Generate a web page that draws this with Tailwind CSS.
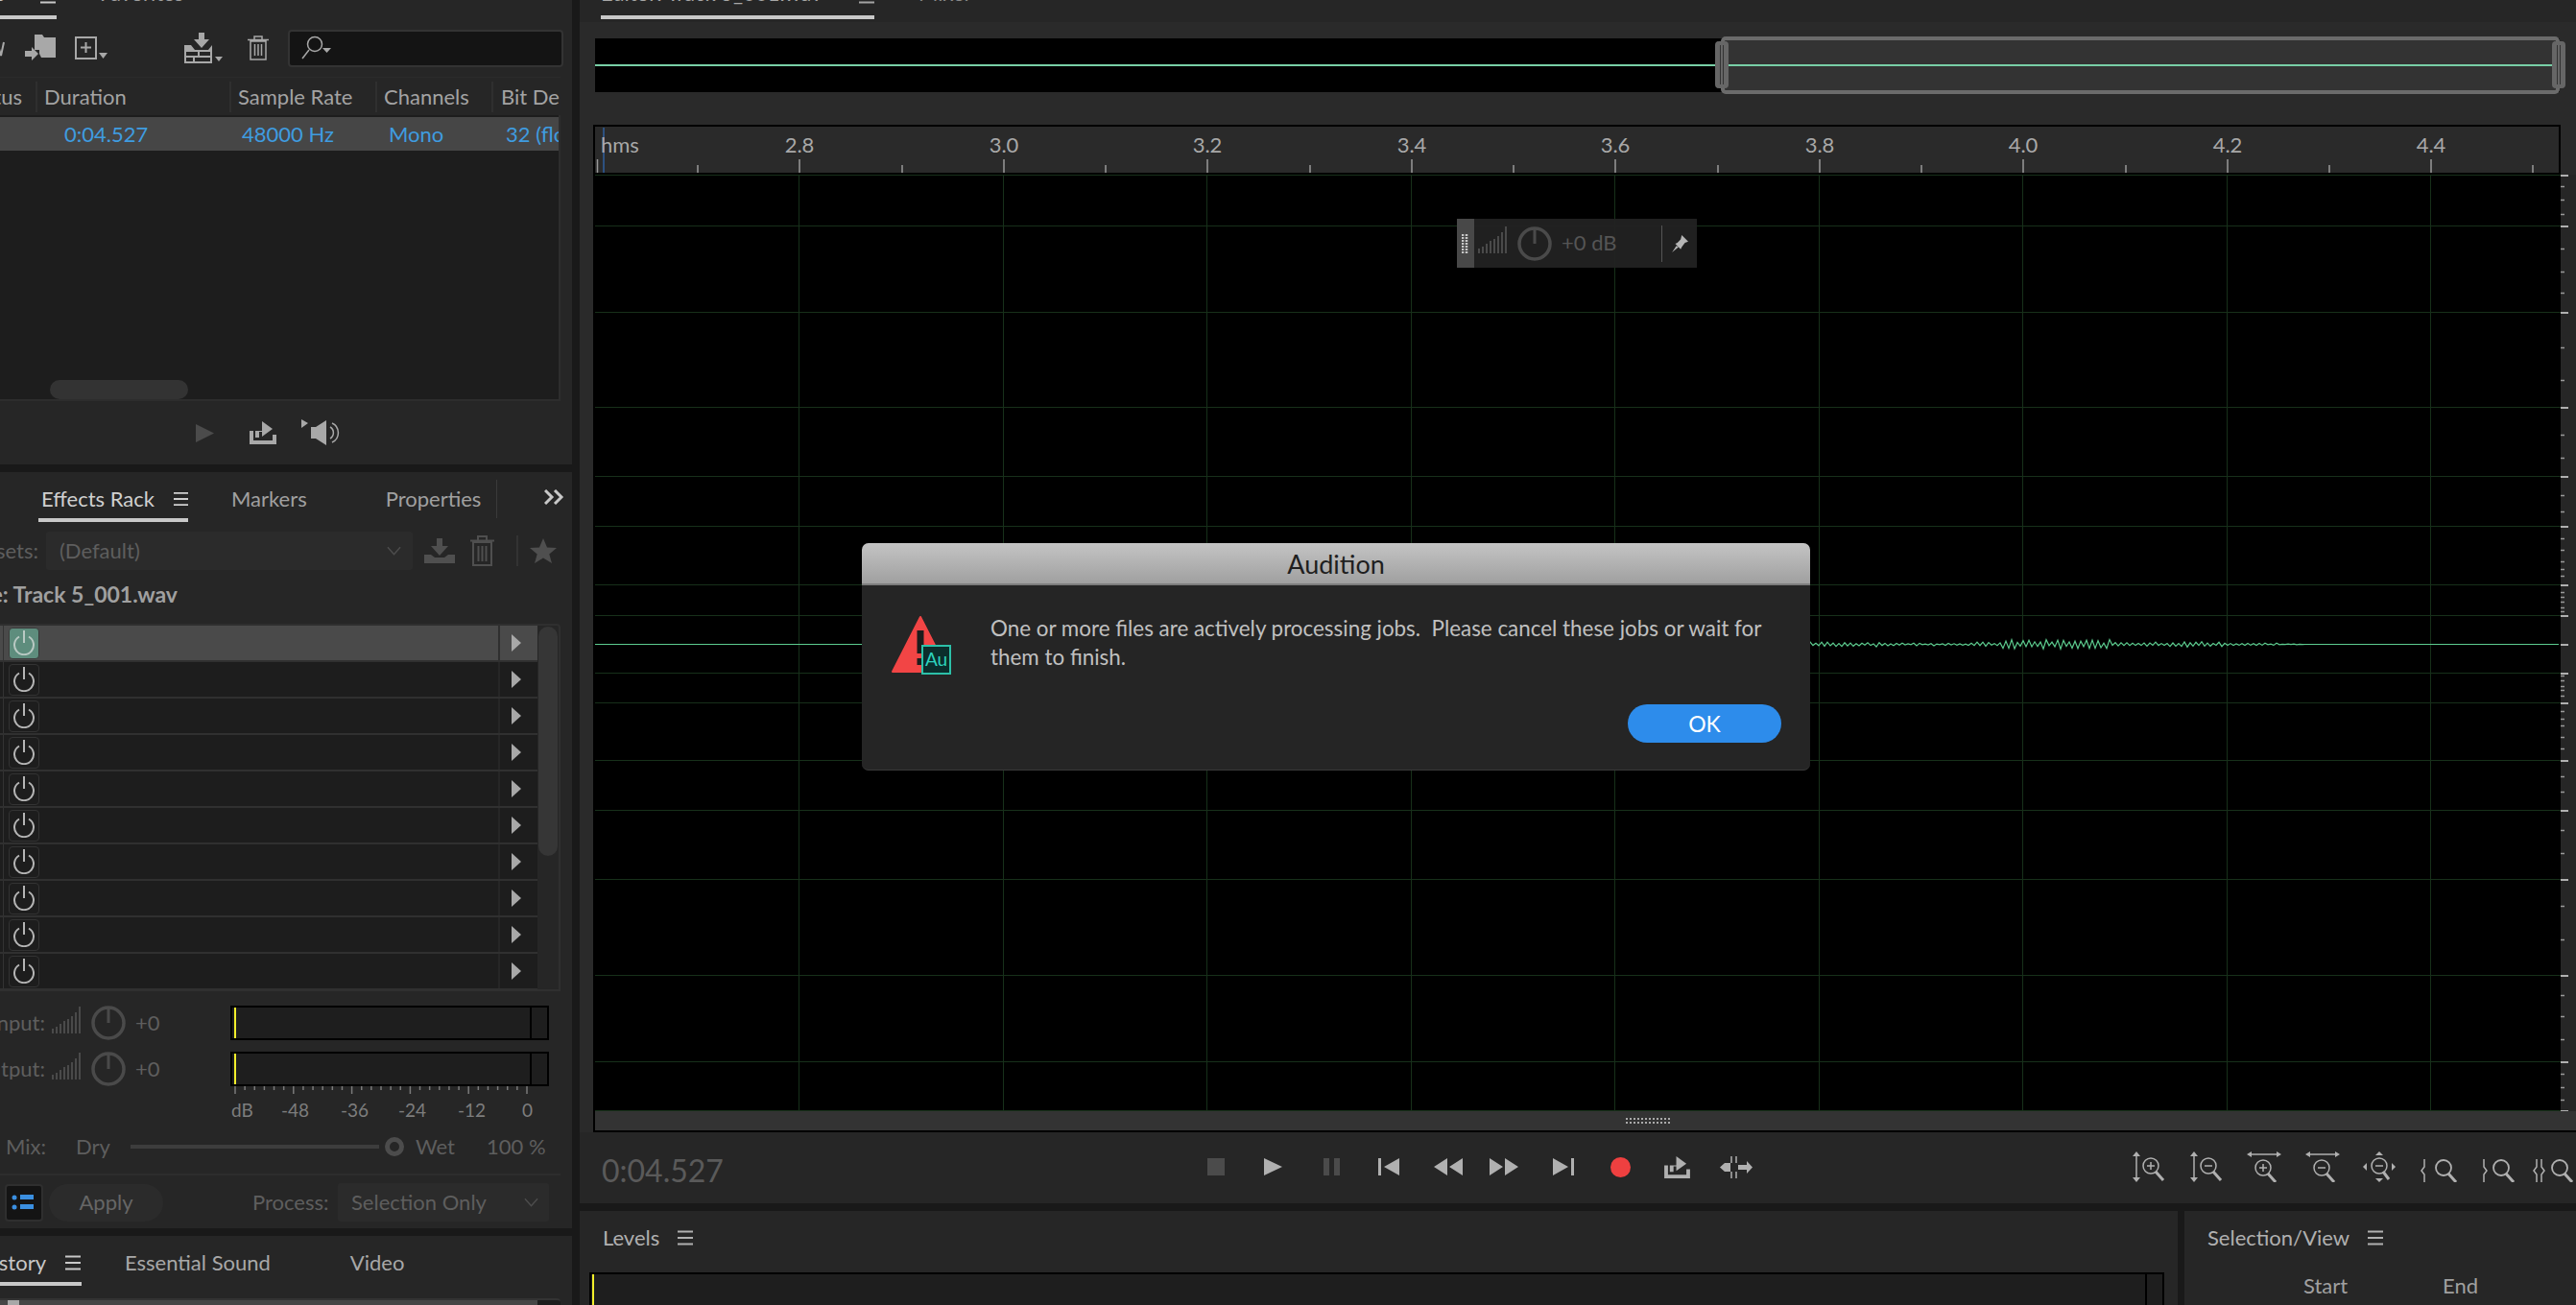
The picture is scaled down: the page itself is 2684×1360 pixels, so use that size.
<!DOCTYPE html>
<html lang="en">
<head>
<meta charset="UTF-8">
<title>Audition</title>
<script src="https://cdn.jsdelivr.net/npm/@tailwindcss/browser@4"></script>
</head>
<body class="bg-[#191919] w-[2684px] h-[1360px] overflow-hidden relative font-['Lato',sans-serif] text-[22px] leading-none text-[#a3a3a3]">

<svg class="hidden">
  <symbol id="menu" viewBox="0 0 16 16"><path d="M0 1.500h16M0 8h16M0 14.500h16" stroke="currentColor" stroke-width="2" fill="none"/></symbol>
  <symbol id="power" viewBox="0 0 24 26"><path d="M7 6.500a10 10 0 1 0 10 0" fill="none" stroke="currentColor" stroke-width="2"/><path d="M12 0v13" stroke="currentColor" stroke-width="2"/></symbol>
  <symbol id="bars" viewBox="0 0 30 28"><path d="M1 28v-5M5 28v-7M9 28v-10M13 28v-13M17 28v-15M21 28v-18M25 28v-22M29 28V0" stroke="currentColor" stroke-width="2" fill="none"/></symbol>
  <symbol id="knob" viewBox="0 0 36 36"><circle cx="18" cy="18" r="16" fill="none" stroke="currentColor" stroke-width="3.500"/><path d="M18 2v16" stroke="currentColor" stroke-width="3"/></symbol>
  <symbol id="chev" viewBox="0 0 16 10"><path d="M1 1l7 8 7-8" fill="none" stroke="currentColor" stroke-width="1.500"/></symbol>
</svg>

<div class="flex h-full">
  <!-- left column -->
  <div class="w-[596px] flex flex-col gap-[8px] shrink-0">

    <!-- files panel -->
    <section class="h-[484px] bg-[#262626] flex flex-col shrink-0">
      <div class="h-[20px] relative overflow-hidden shrink-0">
        <div class="w-[59px] h-[20px] border-b-4 border-[#c8c8c8] flex justify-end overflow-hidden">
          <span class="-mt-[18px] mr-[37px] whitespace-nowrap text-[#c8c8c8]">Files</span>
          <svg class="w-[16px] h-[16px] text-[#c8c8c8] shrink-0 -mt-[12px] mr-[1px]"><use href="#menu"/></svg>
        </div>
        <span class="absolute left-[104px] -top-[18px] text-[#a0a0a0]">Favorites</span>
      </div>
      <div class="h-[60px] flex items-center text-[#a8a8a8] shrink-0">
        <svg class="w-[5px] h-[24px] ml-0" viewBox="0 0 5 24"><path d="M-3 6l4 14 3-14" fill="none" stroke="currentColor" stroke-width="2"/></svg>
        <svg class="w-[33px] h-[28px] ml-[21px]" viewBox="0 0 33 28"><path d="M10 0h8l2 3h12v21H17l-2-4v-4H10z" fill="currentColor"/><path d="M0 17h7v-4l7 7-7 7v-4H0z" fill="currentColor"/></svg>
        <svg class="w-[34px] h-[24px] ml-[19px]" viewBox="0 0 34 24"><path d="M1 1h21v22H1z" fill="none" stroke="currentColor" stroke-width="2"/><path d="M11.500 6v11M6 11.500h11" stroke="currentColor" stroke-width="2"/><path d="M25 17h9l-4.500 6z" fill="currentColor"/></svg>
        <svg class="w-[40px] h-[32px] ml-[80px]" viewBox="0 0 40 32"><path d="M15 0h6v7h5l-8 9-8-9h5z" fill="currentColor"/><path d="M0 13h7l4 5h14l4-5v19H0zM2 20v4h12v-4zM16 20v4h11v-4zM2 26v4h7v-4zM11 26v4h16v-4z" fill="currentColor" fill-rule="evenodd"/><path d="M32 25h8l-4 5z" fill="currentColor"/></svg>
        <svg class="w-[22px] h-[26px] ml-[26px]" viewBox="0 0 22 26"><path d="M3 6h16v19H3zM0 4.500h22M7 4V1h8v3M7.500 9v12M11 9v12M14.500 9v12" fill="none" stroke="currentColor" stroke-width="1.500"/></svg>
        <div class="w-[287px] h-[39px] ml-[20px] bg-[#141414] border-2 border-[#333] rounded-[4px] flex items-center pl-[12px]">
          <svg class="w-[34px] h-[26px]" viewBox="0 0 34 26"><circle cx="14" cy="9" r="7.500" fill="none" stroke="currentColor" stroke-width="1.500"/><path d="M8 15L1 24" stroke="currentColor" stroke-width="1.500"/><path d="M22 13h9l-4.500 5z" fill="currentColor"/></svg>
        </div>
      </div>
      <div class="w-[584px] h-[40px] grid grid-cols-[37px_202px_152px_121px_72px] items-center overflow-hidden border-t border-[#2b2b2b] shrink-0 whitespace-nowrap">
        <div class="flex justify-end pr-[14px] overflow-hidden"><span>Status</span></div>
        <div class="border-l-2 border-[#2f2f2f] pl-[7px] h-[32px] flex items-center">Duration</div>
        <div class="border-l-2 border-[#2f2f2f] pl-[7px] h-[32px] flex items-center">Sample Rate</div>
        <div class="border-l-2 border-[#2f2f2f] pl-[7px] h-[32px] flex items-center">Channels</div>
        <div class="border-l-2 border-[#2f2f2f] pl-[8px] h-[32px] flex items-center overflow-hidden">Bit Depth</div>
      </div>
      <div class="w-[584px] h-[298px] bg-[#1d1d1d] border-r-2 border-b-2 border-[#2d2d2d] flex flex-col shrink-0">
        <div class="h-[35px] mt-[2px] bg-[#464646] grid grid-cols-[37px_202px_152px_121px_70px] items-center overflow-hidden text-[#3f9ce0] whitespace-nowrap shrink-0">
          <div></div><div class="pl-[30px]">0:04.527</div><div class="pl-[13px]">48000 Hz</div><div class="pl-[14px]">Mono</div><div class="pl-[15px] overflow-hidden">32 (float)</div>
        </div>
        <div class="mt-auto ml-[52px] w-[144px] h-[20px] rounded-full bg-[#333]"></div>
      </div>
      <div class="flex-1 flex items-center text-[#a8a8a8]">
        <svg class="w-[19px] h-[19px] ml-[204px]" viewBox="0 0 19 19"><path d="M0 0l19 9.500L0 19z" fill="#4b4b4b"/></svg>
        <svg class="w-[28px] h-[24px] ml-[37px]" viewBox="0 0 28 24"><path d="M2 10v12h24v-8" fill="none" stroke="currentColor" stroke-width="4"/><path d="M6 17v-7h7V0l11 8-11 8v-5h-3v6z" fill="currentColor"/></svg>
        <svg class="w-[40px] h-[28px] ml-[26px]" viewBox="0 0 40 28"><path d="M0 0l7 4-7 5z" fill="currentColor"/><path d="M10 8h5l11-7v26L15 20h-5z" fill="currentColor"/><path d="M30 8a7 7 0 0 1 0 12M32 4a11 11 0 0 1 0 20" fill="none" stroke="currentColor" stroke-width="1.500"/></svg>
      </div>
    </section>

    <!-- effects rack panel -->
    <section class="h-[788px] bg-[#262626] flex flex-col shrink-0">
      <div class="h-[52px] flex items-center shrink-0">
        <div class="ml-[40px] w-[156px] h-[52px] border-b-4 border-[#c8c8c8] flex items-center pl-[3px] pt-[8px] text-[#d0d0d0]">
          <span class="whitespace-nowrap">Effects Rack</span>
          <svg class="w-[16px] h-[16px] ml-[20px]"><use href="#menu"/></svg>
        </div>
        <span class="ml-[45px] text-[#a0a0a0] mt-[4px]">Markers</span>
        <span class="ml-[82px] text-[#a0a0a0] mt-[4px]">Properties</span>
        <div class="ml-[16px] w-px h-[40px] bg-[#3a3a3a] mt-[4px]"></div>
        <svg class="w-[21px] h-[16px] ml-[49px]" viewBox="0 0 21 16"><path d="M1 1l7 7-7 7M11 1l7 7-7 7" fill="none" stroke="#c8c8c8" stroke-width="3"/></svg>
      </div>
      <div class="h-[40px] mt-[10px] flex items-center text-[#5e5e5e] shrink-0">
        <div class="w-[40px] flex justify-end overflow-hidden"><span>Presets:</span></div>
        <div class="w-[382px] h-[40px] ml-[8px] bg-[#2b2b2b] rounded-[3px] flex items-center justify-between pl-[14px] pr-[12px]">
          <span>(Default)</span>
          <svg class="w-[15px] h-[10px] text-[#4d4d4d]"><use href="#chev"/></svg>
        </div>
        <svg class="w-[32px] h-[26px] ml-[12px]" viewBox="0 0 32 26"><path d="M13 0h6v8h6l-9 10-9-10h6z" fill="#4f4f4f"/><path d="M0 17h7l4 3h10l4-3h7v9H0z" fill="#4f4f4f"/></svg>
        <svg class="w-[25px] h-[32px] ml-[16px]" viewBox="0 0 25 32"><path d="M3 7h19v24H3zM0 5.500h25M8 5V1h9v4M8.500 11v16M12.500 11v16M16.500 11v16" fill="none" stroke="#4f4f4f" stroke-width="2"/></svg>
        <div class="w-[2px] h-[32px] bg-[#333] ml-[23px]"></div>
        <svg class="w-[28px] h-[26px] ml-[12px]" viewBox="0 0 28 26"><path d="M14 0l4 9.500 10 .5-7.700 6.500L23 26l-9-5.500L5 26l2.700-9.500L0 10l10-.5z" fill="#4f4f4f"/></svg>
      </div>
      <div class="h-[58px] w-[185px] flex items-center justify-end overflow-hidden font-bold text-[23px] text-[#a0a0a0] whitespace-nowrap shrink-0 -mt-[2px] pb-[3px]"><span>File: Track 5_001.wav</span></div>
      <div class="w-[584px] h-[383px] flex border-r-2 border-b-2 border-t-2 border-[#2f2f2f] rounded-tr-[4px] shrink-0">
        <div id="rows" class="w-[560px] shrink-0"></div>
        <div class="flex-1 pt-[1px] pl-[1px]"><div class="w-[20px] h-[239px] rounded-full bg-[#363636]"></div></div>
      </div>
      <div class="h-[36px] mt-[15px] flex items-center text-[#5e5e5e] shrink-0">
        <div class="w-[47px] flex justify-end overflow-hidden"><span>Input:</span></div>
        <svg class="w-[30px] h-[28px] ml-[7px] text-[#4a4a4a] -mt-[6px]"><use href="#bars"/></svg>
        <svg class="w-[36px] h-[36px] ml-[11px] text-[#4a4a4a]"><use href="#knob"/></svg>
        <span class="ml-[10px] w-[24px]">+0</span>
        <div class="w-[332px] h-[36px] ml-[75px] border-2 border-black bg-[#1e1e1e] flex">
          <div class="w-[2px] ml-[2px] bg-[#f2ee2a]"></div>
          <div class="ml-auto mr-[16px] w-[2px] bg-black"></div>
        </div>
      </div>
      <div class="h-[36px] mt-[12px] flex items-center text-[#5e5e5e] shrink-0">
        <div class="w-[47px] flex justify-end overflow-hidden"><span>Output:</span></div>
        <svg class="w-[30px] h-[28px] ml-[7px] text-[#4a4a4a] -mt-[6px]"><use href="#bars"/></svg>
        <svg class="w-[36px] h-[36px] ml-[11px] text-[#4a4a4a]"><use href="#knob"/></svg>
        <span class="ml-[10px] w-[24px]">+0</span>
        <div class="w-[332px] h-[36px] ml-[75px] border-2 border-black bg-[#1e1e1e] flex">
          <div class="w-[2px] ml-[2px] bg-[#f2ee2a]"></div>
          <div class="ml-auto mr-[16px] w-[2px] bg-black"></div>
        </div>
      </div>
      <svg id="dbTicks" class="w-[332px] h-[8px] ml-[240px] shrink-0" viewBox="240 0 332 8"></svg>
      <div class="h-[32px] ml-[240px] w-[332px] relative text-[#7d7d7d] text-[19px] shrink-0">
        <span class="absolute left-[1px] top-[7px]">dB</span>
        <span class="absolute left-[53px] top-[7px]">-48</span>
        <span class="absolute left-[115px] top-[7px]">-36</span>
        <span class="absolute left-[175px] top-[7px]">-24</span>
        <span class="absolute left-[237px] top-[7px]">-12</span>
        <span class="absolute left-[304px] top-[7px]">0</span>
      </div>
      <div class="h-[30px] mt-[8px] flex items-center text-[#5e5e5e] shrink-0">
        <span class="ml-[6px] w-[73px]">Mix:</span>
        <span class="w-[57px]">Dry</span>
        <div class="w-[259px] h-[4px] bg-[#3d3d3d]"></div>
        <div class="w-[20px] h-[20px] ml-[6px] rounded-full border-[5px] border-[#4c4c4c]"></div>
        <span class="ml-[12px] w-[74px]">Wet</span>
        <span>100 %</span>
      </div>
      <div class="w-[584px] h-[2px] bg-[#2d2d2d] mt-[13px] shrink-0"></div>
      <div class="h-[40px] mt-[8px] flex items-center text-[#5e5e5e] shrink-0">
        <div class="w-[40px] h-[39px] ml-[5px] bg-[#141414] border-2 border-[#2f2f2f] rounded-[4px] flex items-center justify-center">
          <svg class="w-[26px] h-[18px]" viewBox="0 0 26 18"><circle cx="3" cy="4" r="2.500" fill="#3b8fe0"/><circle cx="3" cy="14" r="2.500" fill="#3b8fe0"/><path d="M9 1h14v5H9zM9 11h14v5H9z" fill="#3b8fe0"/></svg>
        </div>
        <div class="w-[119px] h-[39px] ml-[6px] rounded-full bg-[#2b2b2b] flex items-center justify-center text-[#666]">Apply</div>
        <span class="ml-[93px] w-[89px]">Process:</span>
        <div class="w-[220px] h-[40px] bg-[#2b2b2b] rounded-[3px] flex items-center justify-between pl-[14px] pr-[11px]">
          <span class="whitespace-nowrap">Selection Only</span>
          <svg class="w-[15px] h-[10px] text-[#4d4d4d]"><use href="#chev"/></svg>
        </div>
      </div>
    </section>

    <!-- history panel -->
    <section class="flex-1 bg-[#262626] flex flex-col min-h-0 overflow-hidden">
      <div class="h-[52px] flex items-center shrink-0 text-[#a8a8a8]">
        <div class="w-[85px] h-[52px] border-b-4 border-[#c8c8c8] flex items-center justify-end pr-[1px] pt-[8px] overflow-hidden text-[#c8c8c8]">
          <span class="whitespace-nowrap">History</span>
          <svg class="w-[16px] h-[16px] ml-[20px] shrink-0"><use href="#menu"/></svg>
        </div>
        <span class="ml-[45px] mt-[4px]">Essential Sound</span>
        <span class="ml-[83px] mt-[4px]">Video</span>
      </div>
      <div class="mt-[13px] w-[584px] flex-1 border-t-2 border-[#333] bg-[#1d1d1d] rounded-tr-[4px]">
        <div class="w-[560px] h-[5px] bg-[#464646]"><div class="w-[12px] h-[5px] ml-[8px] bg-[#a8a8a8]"></div></div>
      </div>
    </section>
  </div>

  <!-- main column -->
  <div class="ml-[8px] flex-1 flex flex-col gap-[8px] min-w-0">
    <section class="h-[1254px] bg-[#2a2a2a] flex flex-col shrink-0 relative">
      <div class="h-[23px] bg-[#262626] relative overflow-hidden shrink-0">
        <div class="ml-[22px] w-[285px] h-[20px] border-b-4 border-[#c8c8c8] flex justify-between">
          <span class="-mt-[18px] whitespace-nowrap text-[#a8a8a8]">Editor: Track 5_001.wav</span>
          <svg class="w-[16px] h-[16px] -mt-[12px]"><use href="#menu"/></svg>
        </div>
        <span class="absolute left-[353px] -top-[18px] text-[#8a8a8a]">Mixer</span>
      </div>
      <!-- overview -->
      <div class="ml-[16px] mt-[17px] w-[2047px] h-[56px] bg-black relative shrink-0">
        <div class="absolute left-0 right-0 top-[27px] h-[2px] bg-[#78cfa6]"></div>
        <div class="absolute left-[1173px] -top-[2px] w-[874px] h-[60px] border-4 border-[#6b6b6b] rounded-[5px] bg-[#333] flex items-center">
          <div class="w-full h-[2px] bg-[#78cfa6]"></div>
        </div>
        <div class="absolute left-[1167px] top-[3px] w-[14px] h-[49px] rounded-[4px] bg-[#666] border-x-2 border-[#666] flex justify-center gap-[2px] py-[4px]"><div class="w-px bg-[#333]"></div><div class="w-px bg-[#333]"></div></div>
        <div class="absolute left-[2039px] top-[3px] w-[14px] h-[49px] rounded-[4px] bg-[#666] border-x-2 border-[#666] flex justify-center gap-[2px] py-[4px]"><div class="w-px bg-[#333]"></div><div class="w-px bg-[#333]"></div></div>
      </div>
      <!-- ruler -->
      <div id="ruler" class="ml-[14px] mt-[34px] w-[2050px] h-[52px] bg-[#2a2a2a] border-2 border-black relative shrink-0 text-[#a8a8a8]">
        <svg id="rulerTicks" class="absolute left-0 top-0 w-[2046px] h-[48px]" viewBox="620 132 2046 48"></svg>
        <span class="absolute left-[6px] top-[8px]">hms</span>
      </div>
      <!-- wave -->
      <div class="ml-[14px] h-[976px] flex shrink-0">
        <div class="w-[2050px] bg-black border-l-2 border-black relative shrink-0">
          <svg id="wave" class="absolute left-0 top-0 w-[2048px] h-[976px]" viewBox="620 182 2048 976"></svg>
          <!-- clip gain hud -->
          <div class="absolute left-[898px] top-[46px] w-[250px] h-[51px] bg-[#222]/95 flex items-center text-[#555]">
            <div class="w-[18px] h-full bg-[#484848] flex items-center justify-center">
              <svg class="w-[8px] h-[20px]" viewBox="0 0 8 20"><path d="M1 0v20M5 0v20" stroke="#c8c8c8" stroke-width="2.500" stroke-dasharray="2 1" fill="none"/></svg>
            </div>
            <svg class="w-[30px] h-[28px] ml-[4px] -mt-[8px] text-[#4a4a4a]"><use href="#bars"/></svg>
            <svg class="w-[36px] h-[36px] ml-[11px] text-[#4a4a4a]"><use href="#knob"/></svg>
            <span class="ml-[10px] w-[104px] whitespace-nowrap -mt-[2px]">+0 dB</span>
            <div class="w-[1px] h-[38px] bg-[#555]"></div>
            <svg class="w-[18px] h-[18px] ml-[9px]" viewBox="0 0 16 16"><path d="M10 0l6 6-3 1-3 4-1 2-5-5 2-1 3-3zM5 10l2 1-6 5z" fill="#b5b5b5"/></svg>
          </div>
        </div>
        <svg id="dbRuler" class="w-[16px] h-[976px] shrink-0 bg-[#262626]" viewBox="2668 182 16 976"></svg>
      </div>
      <!-- horizontal scroll -->
      <div class="ml-[14px] h-[22px] bg-[#333] border-b-2 border-l-2 border-black flex items-center shrink-0">
        <svg class="w-[47px] h-[6px] ml-[1074px]" viewBox="0 0 47 6"><path d="M0 1h47M0 5h47" stroke="#aaa" stroke-width="2" stroke-dasharray="2 2" fill="none"/></svg>
      </div>
      <!-- transport -->
      <div class="flex-1 bg-[#262626] flex items-center text-[#b0b0b0]">
        <span class="ml-[23px] w-[631px] text-[32px] text-[#5a5a5a] mt-[6px]">0:04.527</span>
        <div class="flex items-center -mt-[2px]">
          <svg class="w-[18px] h-[18px]" viewBox="0 0 18 18"><path d="M0 0h18v18H0z" fill="#4b4b4b"/></svg>
          <svg class="w-[19px] h-[18px] ml-[41px]" viewBox="0 0 19 18"><path d="M0 0l19 9-19 9z" fill="currentColor"/></svg>
          <svg class="w-[17px] h-[18px] ml-[43px]" viewBox="0 0 17 18"><path d="M0 0h6v18H0zM11 0h6v18h-6z" fill="#4b4b4b"/></svg>
          <svg class="w-[22px] h-[18px] ml-[40px]" viewBox="0 0 22 18"><path d="M0 0h3v18H0zM22 0v18L6 9z" fill="currentColor"/></svg>
          <svg class="w-[30px] h-[18px] ml-[36px]" viewBox="0 0 30 18"><path d="M14 0v18L0 9zM30 0v18L16 9z" fill="currentColor"/></svg>
          <svg class="w-[30px] h-[18px] ml-[28px]" viewBox="0 0 30 18"><path d="M0 0v18l14-9zM16 0v18l14-9z" fill="currentColor"/></svg>
          <svg class="w-[22px] h-[18px] ml-[36px]" viewBox="0 0 22 18"><path d="M0 0v18l16-9zM19 0h3v18h-3z" fill="currentColor"/></svg>
          <div class="w-[21px] h-[21px] ml-[38px] rounded-full bg-[#ef4040]"></div>
          <svg class="w-[29px] h-[23px] ml-[34px]" viewBox="0 0 28 24"><path d="M2 10v12h24v-8" fill="none" stroke="currentColor" stroke-width="4"/><path d="M6 17v-7h7V0l11 8-11 8v-5h-3v6z" fill="currentColor"/></svg>
          <svg class="w-[34px] h-[23px] ml-[30px]" viewBox="0 0 34 23"><path d="M12 0v7M12 16v7M17 0v7M17 16v7" stroke="currentColor" stroke-width="1.500"/><path d="M0 11.500L5 7h6v9H5zM34 11.500L28 5v4h-9v5h9v4z" fill="currentColor"/></svg>
        </div>
        <!-- zoom buttons -->
        <div class="flex items-end ml-[396px] h-[32px] text-[#b0b0b0] -mt-[2px]">
          <svg class="w-[34px] h-[32px]" viewBox="0 0 34 32"><path d="M4 3v26" stroke="currentColor" stroke-width="1.500"/><path d="M4 0l4 5H0zM4 32l4-5H0z" fill="currentColor"/><circle cx="19" cy="15" r="8" fill="none" stroke="currentColor" stroke-width="1.500"/><path d="M15 15h8M19 11v8" stroke="currentColor" stroke-width="1.500"/><path d="M24 21l8 9" stroke="currentColor" stroke-width="3"/></svg>
          <svg class="w-[34px] h-[32px] ml-[26px]" viewBox="0 0 34 32"><path d="M4 3v26" stroke="currentColor" stroke-width="1.500"/><path d="M4 0l4 5H0zM4 32l4-5H0z" fill="currentColor"/><circle cx="19" cy="15" r="8" fill="none" stroke="currentColor" stroke-width="1.500"/><path d="M15 15h8" stroke="currentColor" stroke-width="1.500"/><path d="M24 21l8 9" stroke="currentColor" stroke-width="3"/></svg>
          <svg class="w-[36px] h-[32px] ml-[25px]" viewBox="0 0 36 32"><path d="M3 3h30" stroke="currentColor" stroke-width="1.500"/><path d="M0 3l5-3v6zM36 3l-5-3v6z" fill="currentColor"/><circle cx="17" cy="17" r="8" fill="none" stroke="currentColor" stroke-width="1.500"/><path d="M13 17h8M17 13v8" stroke="currentColor" stroke-width="1.500"/><path d="M22 23l8 9" stroke="currentColor" stroke-width="3"/></svg>
          <svg class="w-[36px] h-[32px] ml-[25px]" viewBox="0 0 36 32"><path d="M3 3h30" stroke="currentColor" stroke-width="1.500"/><path d="M0 3l5-3v6zM36 3l-5-3v6z" fill="currentColor"/><circle cx="17" cy="17" r="8" fill="none" stroke="currentColor" stroke-width="1.500"/><path d="M13 17h8" stroke="currentColor" stroke-width="1.500"/><path d="M22 23l8 9" stroke="currentColor" stroke-width="3"/></svg>
          <svg class="w-[34px] h-[32px] ml-[24px]" viewBox="0 0 34 32"><path d="M17 0l4 4h-8zM17 32l4-4h-8zM0 16l4-4v8zM34 16l-4-4v8z" fill="currentColor"/><circle cx="17" cy="15" r="8" fill="none" stroke="currentColor" stroke-width="1.500"/><path d="M13 15h8" stroke="currentColor" stroke-width="1.500"/><path d="M21 21l6 8" stroke="currentColor" stroke-width="3"/></svg>
          <svg class="w-[40px] h-[24px] ml-[26px]" viewBox="0 0 40 24"><path d="M4 0v8l-3 4 3 4v8" fill="none" stroke="currentColor" stroke-width="1.500"/><circle cx="24" cy="9" r="8" fill="none" stroke="currentColor" stroke-width="1.800"/><path d="M29 15l8 9" stroke="currentColor" stroke-width="3"/></svg>
          <svg class="w-[35px] h-[24px] ml-[25px]" viewBox="0 0 35 24"><path d="M1 0v8l3 4-3 4v8" fill="none" stroke="currentColor" stroke-width="1.500"/><circle cx="19" cy="9" r="8" fill="none" stroke="currentColor" stroke-width="1.800"/><path d="M24 15l8 9" stroke="currentColor" stroke-width="3"/></svg>
          <svg class="w-[42px] h-[24px] ml-[17px]" viewBox="0 0 42 24"><path d="M4 0v8l-3 4 3 4v8M9 0v8l3 4-3 4v8" fill="none" stroke="currentColor" stroke-width="1.500"/><circle cx="28" cy="9" r="8" fill="none" stroke="currentColor" stroke-width="1.800"/><path d="M33 15l8 9" stroke="currentColor" stroke-width="3"/></svg>
        </div>
      </div>
    </section>

    <!-- bottom panels -->
    <div class="flex-1 flex gap-[7px] min-h-0 overflow-hidden">
      <section class="w-[1665px] bg-[#262626] shrink-0 flex flex-col overflow-hidden">
        <div class="h-[64px] flex items-center pl-[24px] pb-[8px] text-[#b0b0b0] shrink-0">
          <span>Levels</span>
          <svg class="w-[16px] h-[16px] ml-[19px]"><use href="#menu"/></svg>
        </div>
        <div class="ml-[10px] w-[1641px] flex-1 border-2 border-b-0 border-black bg-[#1e1e1e] flex">
          <div class="w-[2px] ml-[1px] bg-[#f2ee2a]"></div>
          <div class="ml-auto mr-[16px] w-[2px] bg-black"></div>
        </div>
      </section>
      <section class="flex-1 bg-[#262626] flex flex-col">
        <div class="h-[56px] flex items-center pl-[24px] text-[#b0b0b0] shrink-0">
          <span>Selection/View</span>
          <svg class="w-[16px] h-[16px] ml-[19px]"><use href="#menu"/></svg>
        </div>
        <div class="flex pl-[124px] text-[#a0a0a0] mt-[11px]">
          <span class="w-[145px]">Start</span><span>End</span>
        </div>
      </section>
    </div>
  </div>
</div>

<!-- modal dialog -->
<div class="absolute left-[898px] top-[566px] w-[988px] h-[237px] bg-[#252525] rounded-[7px] overflow-hidden border-b border-[#3a3a3a]">
  <div class="h-[44px] bg-linear-to-b from-[#c4c4c4] to-[#a0a0a0] border-b-2 border-[#7d7d7d] flex items-center justify-center text-[#1f1f1f] text-[27px]">Audition</div>
  <div class="flex pt-[31px]">
    <svg class="w-[62px] h-[62px] ml-[31px] shrink-0" viewBox="0 0 62 62">
      <path d="M30 2 L59 59 H1 Z" fill="#f24545" stroke="#f24545" stroke-width="2" stroke-linejoin="round"/>
      <path d="M26.500 16h7v24h-7zM26.500 45h7v7h-7z" fill="#1c1c1c"/>
      <rect x="32" y="32" width="29" height="29" fill="#0b2e2c" stroke="#2cc0a8" stroke-width="2"/>
      <text x="46.500" y="53" text-anchor="middle" fill="#2dd4bf" font-size="19" font-family="Lato, sans-serif">Au</text>
    </svg>
    <p class="ml-[41px] w-[830px] text-[#c0c0c0] text-[22.4px] leading-[30px] whitespace-pre-wrap -mt-[1px]">One or more files are actively processing jobs.  Please cancel these jobs or wait for them to finish.</p>
  </div>
  <div class="flex justify-end pr-[30px] pt-[31px]">
    <div class="w-[160px] h-[40px] rounded-full bg-[#2d8ceb] text-white flex items-center justify-center text-[23px]">OK</div>
  </div>
</div>

<script>
  // rack rows
  var rows = '';
  for (var i = 0; i < 10; i++) {
    var on = i === 0;
    rows += '<div class="h-[38px] flex items-center border-b-2 border-[#303030] ' + (on ? 'bg-[#4a4a4a]' : 'bg-[#1d1d1d]') + '">' +
      '<div class="w-[1px] h-full ml-[3px] bg-[#333]"></div>' +
      '<div class="w-[32px] h-[33px] ml-[5px] rounded-[4px] border flex items-center justify-center ' + (on ? 'bg-[#5e8d7d] border-[#3a3a3a] text-[#b9c9c3]' : 'border-[#333] text-[#b5b5b5]') + '">' +
      '<svg class="w-[24px] h-[26px]"><use href="#power"/></svg></div>' +
      '<div class="w-[2px] h-full ml-[478px] ' + (on ? 'bg-[#2f2f2f]' : 'bg-[#262626]') + '"></div>' +
      '<svg class="w-[10px] h-[18px] ml-[12px]" viewBox="0 0 10 18"><path d="M0 0l10 9-10 9z" fill="#a8a8a8"/></svg></div>';
  }
  document.getElementById('rows').innerHTML = rows;

  // db ticks below the meters
  var t = '';
  for (var k = 0; k <= 30; k++) {
    var x = 245 + k * 304 / 30;
    t += '<path d="M' + x + ' 0V' + (k % 6 === 0 ? 8 : 4) + '" stroke="#7a7a7a" stroke-width="1.500"/>';
  }
  document.getElementById('dbTicks').innerHTML = t;

  // time ruler
  var labels = ['2.8','3.0','3.2','3.4','3.6','3.8','4.0','4.2','4.4'];
  var ruler = document.getElementById('ruler');
  var rt = '<path d="M622.500 166V180" stroke="#9a9a9a" stroke-width="1.500"/><path d="M629 133V180" stroke="#2f5f9f" stroke-width="1.500"/>';
  var grid = '';
  labels.forEach(function (l, i) {
    var x = Math.round(833 + i * 212.5);
    rt += '<path d="M' + x + ' 166V180" stroke="#9a9a9a" stroke-width="1.500"/>';
    rt += '<path d="M' + (x - 106) + ' 172V180" stroke="#9a9a9a" stroke-width="1.500"/>';
    if (i === labels.length - 1) rt += '<path d="M' + (x + 106) + ' 172V180" stroke="#9a9a9a" stroke-width="1.500"/>';
    grid += '<path d="M' + (x - 0.5) + ' 182V1158" stroke="#17301a" shape-rendering="crispEdges"/>';
    var s = document.createElement('span');
    s.className = 'absolute top-[8px] -translate-x-1/2';
    s.style.left = (x - 620) + 'px';
    s.textContent = l;
    ruler.appendChild(s);
  });
  document.getElementById('rulerTicks').innerHTML = rt;

  // horizontal grid + long ticks of the amplitude ruler
  var hLines = [182, 235, 325, 424, 496, 548, 609, 641, 701, 732, 792, 844, 916, 1016, 1106, 1157];
  var shortTicks = [194, 208, 223, 259, 283, 305, 362, 396, 453, 477, 516, 533, 561, 573, 585, 593, 600, 617, 622, 627, 633, 637, 704, 709, 715, 719, 725, 741, 749, 756, 768, 780, 809, 825, 865, 889, 944, 979, 1037, 1059, 1083, 1119, 1133, 1146];
  var db = '';
  hLines.forEach(function (y) {
    grid += '<path d="M620 ' + (y + 0.5) + 'H2668" stroke="#17301a" shape-rendering="crispEdges"/>';
    db += '<path d="M2668 ' + (y + 1) + 'h8" stroke="#b0b0b0" stroke-width="2"/>';
  });
  db += '<path d="M2668 672h8" stroke="#b0b0b0" stroke-width="2"/>';
  shortTicks.forEach(function (y) {
    db += '<path d="M2668 ' + (y + 0.5) + 'h4" stroke="#9a9a9a" stroke-width="1.500"/>';
  });
  document.getElementById('dbRuler').innerHTML = db;

  // waveform
  function env(x) {
    if (x < 1880) return 0;
    if (x < 1965) return 2.5;
    if (x < 2060) return 1.5;
    if (x < 2085) return 2.5;
    if (x < 2200) return 5;
    if (x < 2320) return 3;
    if (x < 2375) return 1.2;
    if (x < 2400) return 0.4;
    return 0;
  }
  var pts = [], seed = 7, n = 0;
  for (var px = 620; px < 2667; px += 3) {
    seed = (seed * 9301 + 49297) % 233280;
    var sign = n++ % 2 ? 1 : -1;
    var a = env(px) * (0.25 + 0.75 * seed / 233280);
    pts.push(px + ',' + (671.5 + sign * a).toFixed(1));
  }
  document.getElementById('wave').innerHTML = grid + '<polyline points="' + pts.join(' ') + '" fill="none" stroke="#5ccb8e" stroke-width="1.200"/>';
</script>
</body>
</html>
